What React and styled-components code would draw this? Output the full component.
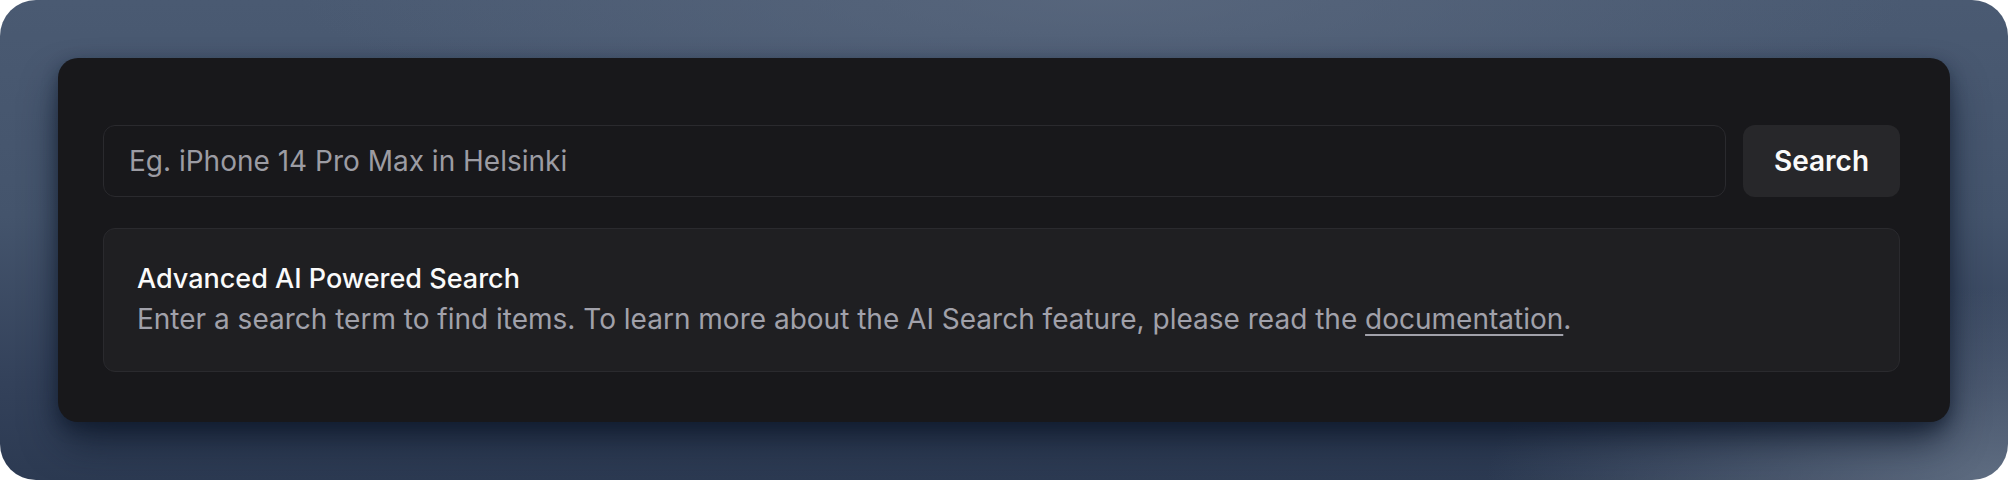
import React from "react";
import styled, { createGlobalStyle } from "styled-components";

const GlobalStyle = createGlobalStyle`
  html, body {
    margin: 0;
    padding: 0;
    background: #ffffff;
  }

  body {
    font-family: Inter, "Noto Sans", "Liberation Sans", sans-serif;
    -webkit-font-smoothing: antialiased;
  }
`;

const App = () => {
  return (
    <>
      <GlobalStyle />
      <Frame>
        <Card>
          <SearchRow>
            <SearchInput type="text" placeholder="Eg. iPhone 14 Pro Max in Helsinki" />
            <SearchButton>Search</SearchButton>
          </SearchRow>
          <InfoBox>
            <InfoTitle>Advanced AI Powered Search</InfoTitle>
            <InfoText>
              Enter a search term to find items. To learn more about the AI Search feature, please read the{" "}
              <DocLink href="#">documentation</DocLink>.
            </InfoText>
          </InfoBox>
        </Card>
      </Frame>
    </>
  );
};

const Frame = styled.div`
  box-sizing: border-box;
  width: 2008px;
  height: 480px;
  padding: 58px;
  border-radius: 36px;
  overflow: hidden;

  background:
    radial-gradient(ellipse 26% 40% at 100% 100%, rgba(104, 118, 138, 0.85) 0%, rgba(104, 118, 138, 0) 100%),
    radial-gradient(ellipse 40% 28% at 55% 0%, rgba(92, 106, 128, 0.7) 0%, rgba(92, 106, 128, 0) 100%),
    linear-gradient(180deg, #4a5a72 0%, #44546c 45%, #33415a 80%, #2c3a52 100%);
`;

const Card = styled.div`
  box-sizing: border-box;
  height: 364px;
  padding: 67px 50px 50px 45px;
  display: flex;
  flex-direction: column;
  gap: 31px;

  background: #18181b;
  border-radius: 20px;
  box-shadow:
    0 22px 40px -6px rgba(12, 22, 40, 0.8),
    0 6px 16px rgba(12, 22, 40, 0.45);
`;

const SearchRow = styled.div`
  display: flex;
  align-items: stretch;
  gap: 17px;
  height: 72px;
`;

const SearchInput = styled.input`
  flex: 1;
  box-sizing: border-box;
  height: 72px;
  padding: 0 25px;

  background: #18181b;
  border: 1.5px solid #2a2a2e;
  border-radius: 12px;
  outline: none;

  font-family: Inter, "Noto Sans", "Liberation Sans", sans-serif;
  font-size: 28px;
  color: #fafafa;

  &::placeholder {
    color: #9c9ca3;
  }
`;

const SearchButton = styled.button`
  box-sizing: border-box;
  width: 157px;
  height: 72px;
  padding: 0;

  background: #27272a;
  border: none;
  border-radius: 12px;
  cursor: pointer;

  font-family: Inter, "Noto Sans", "Liberation Sans", sans-serif;
  font-size: 28px;
  font-weight: 600;
  color: #fafafa;
`;

const InfoBox = styled.div`
  box-sizing: border-box;
  height: 144px;
  padding: 30px 33px 33px;

  background: #1f1f22;
  border: 1.5px solid #2a2a2e;
  border-radius: 12px;
`;

const InfoTitle = styled.h3`
  margin: 0;
  font-size: 27px;
  line-height: 40px;
  font-weight: 500;
  color: #fafafa;
`;

const InfoText = styled.p`
  margin: 0;
  font-size: 28px;
  line-height: 40px;
  color: #a1a1aa;
`;

const DocLink = styled.a`
  color: #a1a1aa;
  text-decoration: underline;
  text-underline-offset: 5px;
  text-decoration-thickness: 2px;
`;

export default App;
